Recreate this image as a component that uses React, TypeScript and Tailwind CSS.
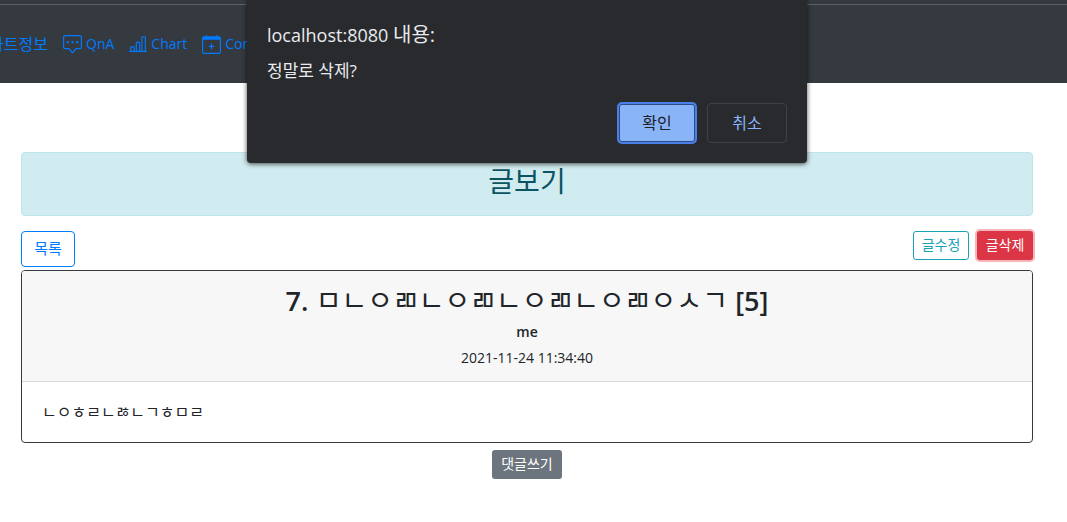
import type { ReactNode } from "react";
import { BsBarChartLine, BsCalendarPlus, BsChatSquareDots } from "react-icons/bs";

function NavLink({ icon, children }: { icon: ReactNode; children: ReactNode }) {
  return (
    <a href="#" className="flex shrink-0 items-center gap-1 text-sm leading-6 whitespace-nowrap text-[#007bff]">
      {icon}
      <span>{children}</span>
    </a>
  );
}

function Navbar() {
  return (
    <header className="h-[83px] bg-[#343a40] pt-1">
      <nav className="flex items-center gap-[15px] border-t border-[#5c6064] pt-[27px]">
        <div className="flex w-12 shrink-0 justify-end overflow-hidden">
          <a href="#" className="text-base leading-6 whitespace-nowrap text-[#007bff]">
            차트정보
          </a>
        </div>
        <NavLink icon={<BsChatSquareDots size={19} />}>QnA</NavLink>
        <NavLink icon={<BsBarChartLine size={18} />}>Chart</NavLink>
        <NavLink icon={<BsCalendarPlus size={19} />}>Com</NavLink>
      </nav>
    </header>
  );
}

function ConfirmDialog() {
  return (
    <div
      role="dialog"
      aria-labelledby="confirm-title"
      aria-describedby="confirm-text"
      className="absolute top-0 left-[247px] w-[560px] rounded-b bg-[#292a2d] px-5 pt-5 pb-5 text-[#e8eaed] shadow-[0_1px_5px_rgba(0,0,0,0.7)]"
    >
      <h2 id="confirm-title" className="text-lg leading-[30px]">
        localhost:8080 <span className="text-xl leading-[30px]">내용:</span>
      </h2>
      <p id="confirm-text" className="mt-2 text-[17px] leading-[26px]">
        정말로 삭제?
      </p>
      <div className="mt-[19px] flex items-center justify-end gap-3">
        <button
          type="button"
          className="h-[38px] w-[76px] rounded-[3px] border border-[#2c4a85] bg-[#8ab4f8] text-base text-[#202124] ring-2 ring-[#4a80e8]"
        >
          확인
        </button>
        <button type="button" className="h-10 w-20 rounded border border-[#3f4145] text-base text-[#8ab4f8]">
          취소
        </button>
      </div>
    </div>
  );
}

export default function App() {
  return (
    <div className="relative min-h-screen overflow-hidden bg-white font-['Open_Sans','Noto_Sans_CJK_KR',sans-serif] text-[#212529]">
      <Navbar />
      <main className="mt-[69px] mr-[34px] ml-[21px]">
        <h1 className="rounded border border-[#bee5eb] bg-[#d1ecf1] pt-[11px] pb-[17px] text-center text-[28px] leading-[34px] text-[#0c5460]">
          글보기
        </h1>
        <div className="mt-[15px] flex items-start justify-between">
          <button
            type="button"
            className="h-9 w-[54px] rounded border border-[#007bff] pb-0.5 text-[15px] text-[#007bff]"
          >
            목록
          </button>
          <div className="flex gap-2">
            <button
              type="button"
              className="h-[29px] w-14 rounded-[3px] border border-[#17a2b8] pb-0.5 text-sm text-[#17a2b8]"
            >
              글수정
            </button>
            <button
              type="button"
              className="h-[29px] w-14 rounded-[3px] bg-[#dc3545] pb-0.5 text-sm text-white ring-2 ring-[#f5b5bb]"
            >
              글삭제
            </button>
          </div>
        </div>
        <article className="mt-[3px] overflow-hidden rounded border border-[#343a40]">
          <header className="border-b border-[#d9d9d9] bg-[#f7f7f7] pt-3 pb-[11px] text-center">
            <h2 className="text-[28px] leading-[34px]">
              <span className="text-[27px] leading-[34px] font-semibold">7.</span> ㅁㄴㅇㄻㄴㅇㄻㄴㅇㄻㄴㅇㄻㅇㅅㄱ{" "}
              <span className="text-[27px] leading-[34px] font-semibold">[5]</span>
            </h2>
            <p className="mt-[2px] text-sm leading-6 font-semibold">me</p>
            <p className="mt-[2px] text-sm leading-6">2021-11-24 11:34:40</p>
          </header>
          <p className="px-5 pt-[18px] pb-[18px] text-base leading-6">ㄴㅇㅎㄹㄴㅀㄴㄱㅎㅁㄹ</p>
        </article>
        <div className="mt-[7px] flex justify-center">
          <button type="button" className="h-[29px] w-[70px] rounded-[3px] bg-[#6c757d] pb-0.5 text-sm text-white">
            댓글쓰기
          </button>
        </div>
      </main>
      <ConfirmDialog />
    </div>
  );
}
